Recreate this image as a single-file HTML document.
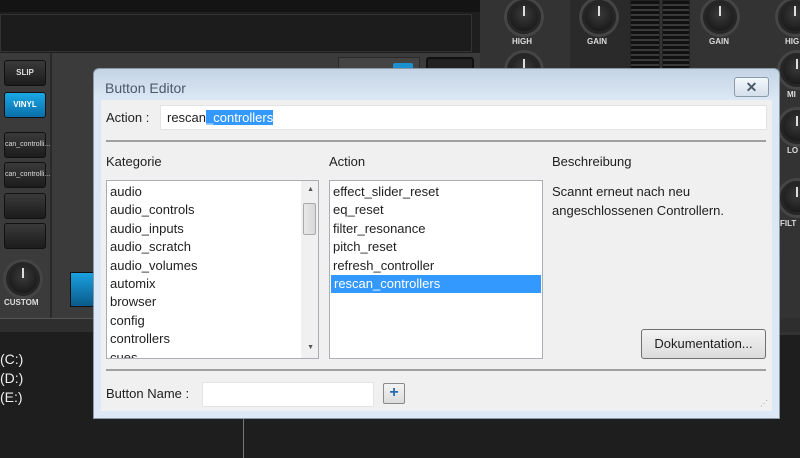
<!DOCTYPE html>
<html><head><meta charset="utf-8"><style>
*{margin:0;padding:0;box-sizing:border-box}
body{width:800px;height:458px;overflow:hidden;background:#1e1e1e;position:relative;font-family:"Liberation Sans",sans-serif}
.a{position:absolute}
.knob{position:absolute;width:34px;height:34px;border-radius:50%;background:radial-gradient(circle at 50% 40%,#3a3a3a,#111);border:3px solid #262626;box-shadow:0 0 0 3px #454545}
.knob:after{content:"";position:absolute;left:13px;top:3px;width:2px;height:10px;background:#ddd}
.kl{position:absolute;color:#ddd;font-size:8px;font-weight:bold}
.btn{position:absolute;left:4px;width:42px;height:26px;border-radius:3px;background:linear-gradient(#3a3a3a,#1c1c1c);border:1px solid #111;color:#ddd;font-size:8px;font-weight:bold;text-align:center;line-height:24px}
.t{font-size:13px;color:#1e1e1e}
.list{position:absolute;background:#fff;border:1px solid #abadb3;font-size:13px;color:#1e1e1e;overflow:hidden}
.list div{height:18.4px;line-height:18.4px;padding-left:3px;white-space:nowrap}
</style></head><body>
<div class="a" style="left:0;top:0;width:480px;height:12px;background:#141414"></div>
<div class="a" style="left:0;top:14px;width:472px;height:38px;background:#1c1c1c;border:1px solid #333"></div>
<div class="a" style="left:0;top:53px;width:480px;height:265px;background:#3b3b3b"></div>
<div class="a" style="left:50px;top:53px;width:2px;height:265px;background:#2a2a2a"></div>
<div class="a" style="left:338px;top:57px;width:82px;height:15px;background:#444;border:1px solid #2a2a2a"></div>
<div class="a" style="left:393px;top:63px;width:20px;height:10px;background:#1a90d0;border-radius:2px"></div>
<div class="a" style="left:426px;top:57px;width:48px;height:15px;background:#222;border:2px solid #111;border-radius:3px"></div>
<div class="a" style="left:70px;top:272px;width:24px;height:35px;background:linear-gradient(#1aa0e0,#0a5a8a);border:1px solid #111"></div>
<div class="btn" style="top:60px">SLIP</div>
<div class="btn" style="top:92px;background:linear-gradient(#1aa7e6,#0b6fa8);color:#fff">VINYL</div>
<div class="btn" style="top:132px;font-weight:normal;font-size:7px">can_controlli...</div>
<div class="btn" style="top:162px;font-weight:normal;font-size:7px">can_controlli...</div>
<div class="btn" style="top:193px"></div>
<div class="btn" style="top:223px"></div>
<div class="knob" style="left:6px;top:262px"></div>
<div class="kl" style="left:4px;top:298px">CUSTOM</div>
<div class="a" style="left:0;top:318px;width:480px;height:14px;background:#2e2e2e;border-top:1px solid #555"></div>
<div class="a" style="left:480px;top:0;width:320px;height:335px;background:#333"></div>
<div class="a" style="left:570px;top:0;width:78px;height:70px;background:#2a2a2a"></div>
<div class="a" style="left:630px;top:0;width:30px;height:70px;background:repeating-linear-gradient(#111 0 3px,#3a3a3a 3px 5px);border:1px solid #222"></div>
<div class="a" style="left:662px;top:0;width:28px;height:70px;background:repeating-linear-gradient(#111 0 3px,#3a3a3a 3px 5px);border:1px solid #222"></div>
<div class="knob" style="left:507px;top:0px"></div><div class="kl" style="left:512px;top:37px">HIGH</div>
<div class="knob" style="left:582px;top:0px"></div><div class="kl" style="left:587px;top:37px">GAIN</div>
<div class="knob" style="left:703px;top:0px"></div><div class="kl" style="left:709px;top:37px">GAIN</div>
<div class="knob" style="left:778px;top:0px"></div><div class="kl" style="left:785px;top:37px">HIG</div>
<div class="knob" style="left:507px;top:53px"></div>
<div class="knob" style="left:780px;top:53px"></div><div class="kl" style="left:787px;top:90px">MI</div>
<div class="knob" style="left:780px;top:110px"></div><div class="kl" style="left:787px;top:146px">LO</div>
<div class="knob" style="left:780px;top:181px"></div><div class="kl" style="left:780px;top:219px">FILT</div>
<div class="a" style="left:480px;top:318px;width:320px;height:14px;background:#2e2e2e"></div>
<div class="a" style="left:243px;top:418px;width:1px;height:40px;background:#777"></div>
<div class="a" style="left:0;top:350px;color:#eee;font-size:14px;line-height:19px">(C:)<br>(D:)<br>(E:)</div>
<div class="a" style="left:93px;top:68px;width:687px;height:351px;background:linear-gradient(#c4d4e4,#dbe7f4 30px,#dce8f5);border:1px solid #8a98a8;border-radius:6px 6px 0 0"></div>
<div class="a t" style="left:105px;top:80px;color:#4a5a6a;font-size:14px">Button Editor</div>
<div class="a" style="left:734px;top:77px;width:35px;height:20px;border:1px solid #8a9aaa;border-radius:3px;background:linear-gradient(#f4f8fc,#d4dfeb);text-align:center;font-size:14px;line-height:18px;color:#4a5a6a;font-weight:bold">✕</div>
<div class="a" style="left:101px;top:100px;width:671px;height:311px;background:#f0f0f0"></div>
<div class="a t" style="left:106px;top:110px">Action :</div>
<div class="a" style="left:160px;top:105px;width:607px;height:25px;background:#fff;border:1px solid #e3e3e3"></div>
<div class="a t" style="left:167px;top:110px">rescan<span style="background:#3399ff;color:#fff">_controllers</span></div>
<div class="a" style="left:106px;top:140px;width:660px;height:2px;background:#a0a0a0"></div>
<div class="a t" style="left:106px;top:154px">Kategorie</div>
<div class="a t" style="left:329px;top:154px">Action</div>
<div class="a t" style="left:552px;top:154px">Beschreibung</div>
<div class="list" style="left:106px;top:180px;width:213px;height:179px;padding-top:2px">
<div>audio</div><div>audio_controls</div><div>audio_inputs</div><div>audio_scratch</div><div>audio_volumes</div><div>automix</div><div>browser</div><div>config</div><div>controllers</div><div>cues</div>
<div class="a" style="right:0;top:0;width:17px;height:177px;background:#f0f0f0"></div>
<div class="a" style="right:4px;top:5px;font-size:7px;color:#555;height:auto;line-height:8px">▲</div>
<div class="a" style="right:2px;top:22px;width:13px;height:32px;background:linear-gradient(90deg,#e8e8e8,#d8d8d8);border:1px solid #aaa;border-radius:2px;padding:0"></div>
<div class="a" style="right:4px;top:163px;font-size:7px;color:#555;height:auto;line-height:8px">▼</div>
</div>
<div class="list" style="left:329px;top:180px;width:214px;height:179px;padding-top:2px">
<div>effect_slider_reset</div><div>eq_reset</div><div>filter_resonance</div><div>pitch_reset</div><div>refresh_controller</div><div style="background:#3399ff;color:#fff;margin:0 1px">rescan_controllers</div>
</div>
<div class="a t" style="left:552px;top:182px;line-height:19px">Scannt erneut nach neu<br>angeschlossenen Controllern.</div>
<div class="a t" style="left:641px;top:329px;width:125px;height:30px;border:1px solid #707070;border-radius:3px;background:linear-gradient(#f2f2f2,#dcdcdc);text-align:center;line-height:28px">Dokumentation...</div>
<div class="a" style="left:106px;top:369px;width:660px;height:2px;background:#a0a0a0"></div>
<div class="a t" style="left:106px;top:386px">Button Name :</div>
<div class="a" style="left:202px;top:382px;width:172px;height:25px;background:#fff;border:1px solid #e3e3e3"></div>
<div class="a" style="left:383px;top:383px;width:22px;height:21px;border:1px solid #8a8a8a;border-radius:2px;background:linear-gradient(#f4f4f4,#dcdcdc);text-align:center;color:#2a6ab0;font-weight:bold;font-size:16px;line-height:18px">+</div>
<div class="a" style="left:760px;top:399px;font-size:8px;color:#999">⋰</div>
</body></html>
